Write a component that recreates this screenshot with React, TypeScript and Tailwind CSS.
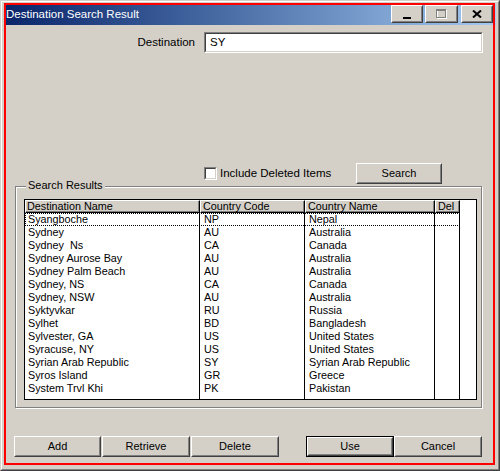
import type { ReactNode } from 'react';

const rows: [string, string, string][] = [
  ['Syangboche', 'NP', 'Nepal'],
  ['Sydney', 'AU', 'Australia'],
  ['Sydney  Ns', 'CA', 'Canada'],
  ['Sydney Aurose Bay', 'AU', 'Australia'],
  ['Sydney Palm Beach', 'AU', 'Australia'],
  ['Sydney, NS', 'CA', 'Canada'],
  ['Sydney, NSW', 'AU', 'Australia'],
  ['Syktyvkar', 'RU', 'Russia'],
  ['Sylhet', 'BD', 'Bangladesh'],
  ['Sylvester, GA', 'US', 'United States'],
  ['Syracuse, NY', 'US', 'United States'],
  ['Syrian Arab Republic', 'SY', 'Syrian Arab Republic'],
  ['Syros Island', 'GR', 'Greece'],
  ['System Trvl Khi', 'PK', 'Pakistan'],
];

// classic 3D raised edge (buttons, title buttons)
function Raised({ className = '', children }: { className?: string; children?: ReactNode }) {
  return (
    <div className={`border border-t-white border-l-white border-b-[#404040] border-r-[#404040] bg-[#d4d0c8] ${className}`}>
      <div className="flex h-full w-full items-center justify-center border border-t-[#d4d0c8] border-l-[#d4d0c8] border-b-[#808080] border-r-[#808080]">
        {children}
      </div>
    </div>
  );
}

// classic sunken edge (edit box, checkbox)
function Sunken({ className = '', children }: { className?: string; children?: ReactNode }) {
  return (
    <div className={`border border-t-[#808080] border-l-[#808080] border-b-white border-r-white ${className}`}>
      <div className="flex h-full w-full items-center border border-t-[#404040] border-l-[#404040] border-b-[#d4d0c8] border-r-[#d4d0c8] bg-white">
        {children}
      </div>
    </div>
  );
}

function Button({ label, className = '' }: { label: string; className?: string }) {
  return (
    <Raised className={`h-[21px] ${className}`}>
      <span className="text-[11px] leading-none text-black">{label}</span>
    </Raised>
  );
}

function TitleButtons() {
  return (
    <div className="flex items-center self-start pt-[1px] pr-[3px]">
      <Raised className="h-[18px] w-[32px]">
        <div className="mt-[8px] h-[2px] w-[8px] bg-black" />
      </Raised>
      <Raised className="ml-[2px] h-[18px] w-[33px]">
        <svg width="12" height="11" viewBox="0 0 12 11">
          <rect x="1.5" y="1.5" width="9" height="8" fill="none" stroke="#fff" />
          <rect x="0.5" y="0.5" width="9" height="8" fill="none" stroke="#808080" />
          <line x1="0" y1="1.5" x2="10" y2="1.5" stroke="#808080" />
        </svg>
      </Raised>
      <Raised className="ml-[3px] h-[18px] w-[32px]">
        <svg width="10" height="8" viewBox="0 0 10 8">
          <path d="M1 0.5 L9 7.5 M9 0.5 L1 7.5" stroke="#000" strokeWidth="2" />
        </svg>
      </Raised>
    </div>
  );
}

function HeaderCell({ label, className = '' }: { label: string; className?: string }) {
  return (
    <div
      className={`h-[13px] border border-t-white border-l-white border-b-black border-r-black bg-[#d4d0c8] pl-[2px] text-[10.8px] leading-[11px] text-black shadow-[inset_-1px_-1px_0_#808080] ${className}`}
    >
      {label}
    </div>
  );
}

function ResultsTable() {
  return (
    <div className="ml-[8px] mt-[12px] flex h-[201px] w-[453px] flex-col border border-black bg-white text-[10.8px] text-black">
      <div className="flex">
        <HeaderCell label="Destination Name" className="w-[175px] !pl-[1px]" />
        <HeaderCell label="Country Code" className="w-[105px]" />
        <HeaderCell label="Country Name" className="w-[130px]" />
        <HeaderCell label="Del" className="w-[25px]" />
      </div>
      {rows.map(([name, code, country], i) => (
        <div key={name} className="flex h-[13px] leading-[13px]">
          <div className={`flex ${i === 0 ? 'outline-1 outline-dotted outline-black -outline-offset-1' : ''}`}>
            <div className="w-[175px] whitespace-pre border-r border-black pl-[3px]">{name}</div>
            <div className="w-[105px] border-r border-black pl-[4px]">{code}</div>
            <div className="w-[130px] border-r border-black pl-[4px]">{country}</div>
            <div className="w-[25px] border-r border-black" />
          </div>
        </div>
      ))}
      <div className="flex flex-1">
        <div className="w-[175px] border-r border-black" />
        <div className="w-[105px] border-r border-black" />
        <div className="w-[130px] border-r border-black" />
        <div className="w-[25px] border-r border-black" />
      </div>
    </div>
  );
}

export default function App() {
  return (
    <div className="relative h-[471px] w-[500px] select-none font-['Liberation_Sans',Arial,sans-serif]">
      <div className="h-full w-full border border-t-[#d4d0c8] border-l-[#d4d0c8] border-b-[#404040] border-r-[#404040]">
        <div className="flex h-full w-full flex-col border border-t-white border-l-white border-b-[#808080] border-r-[#808080] bg-[#d4d0c8] p-[2px]">
          {/* Title bar */}
          <div className="flex h-[21px] items-center bg-gradient-to-r from-[#0a246a] to-[#a6caf0]">
            <span className="flex-1 pl-[2px] text-[11.5px] text-white">Destination Search Result</span>
            <TitleButtons />
          </div>

          {/* Destination */}
          <div className="mt-[7px] flex h-[21px] items-center">
            <span className="w-[191px] text-right text-[11.5px] text-black">Destination</span>
            <Sunken className="ml-[9px] h-[21px] w-[279px]">
              <span className="pl-[4px] text-[11.5px] text-black">SY</span>
            </Sunken>
          </div>

          {/* Include deleted + search */}
          <div className="mt-[110px] flex h-[21px] items-center">
            <Sunken className="ml-[200px] h-[13px] w-[13px]" />
            <span className="ml-[3px] w-[136px] text-[11.5px] text-black">Include Deleted Items</span>
            <Button label="Search" className="w-[86px]" />
          </div>

          {/* Search results group */}
          <div className="relative ml-[11px] mt-[2px] h-[222px] w-[467px] border border-[#808080] shadow-[inset_1px_1px_0_#fff,1px_1px_0_#fff]">
            <span className="absolute left-[10px] top-[-8px] bg-[#d4d0c8] px-[2px] text-[11px] leading-[13px] text-black">
              Search Results
            </span>
            <ResultsTable />
          </div>

          {/* Bottom buttons */}
          <div className="mt-[28px] flex">
            <Button label="Add" className="ml-[10px] w-[87px]" />
            <Button label="Retrieve" className="ml-[1px] w-[88px]" />
            <Button label="Delete" className="ml-[1px] w-[88px]" />
            <div className="ml-[27px] h-[21px] w-[88px] border border-black">
              <Raised className="h-full w-full">
                <span className="text-[11px] leading-none text-black">Use</span>
              </Raised>
            </div>
            <Button label="Cancel" className="w-[88px]" />
          </div>
        </div>
      </div>
      {/* red highlight outline */}
      <div className="pointer-events-none absolute left-[4px] top-[3px] h-[462px] w-[491px] border-2 border-[#ff0000]" />
    </div>
  );
}
